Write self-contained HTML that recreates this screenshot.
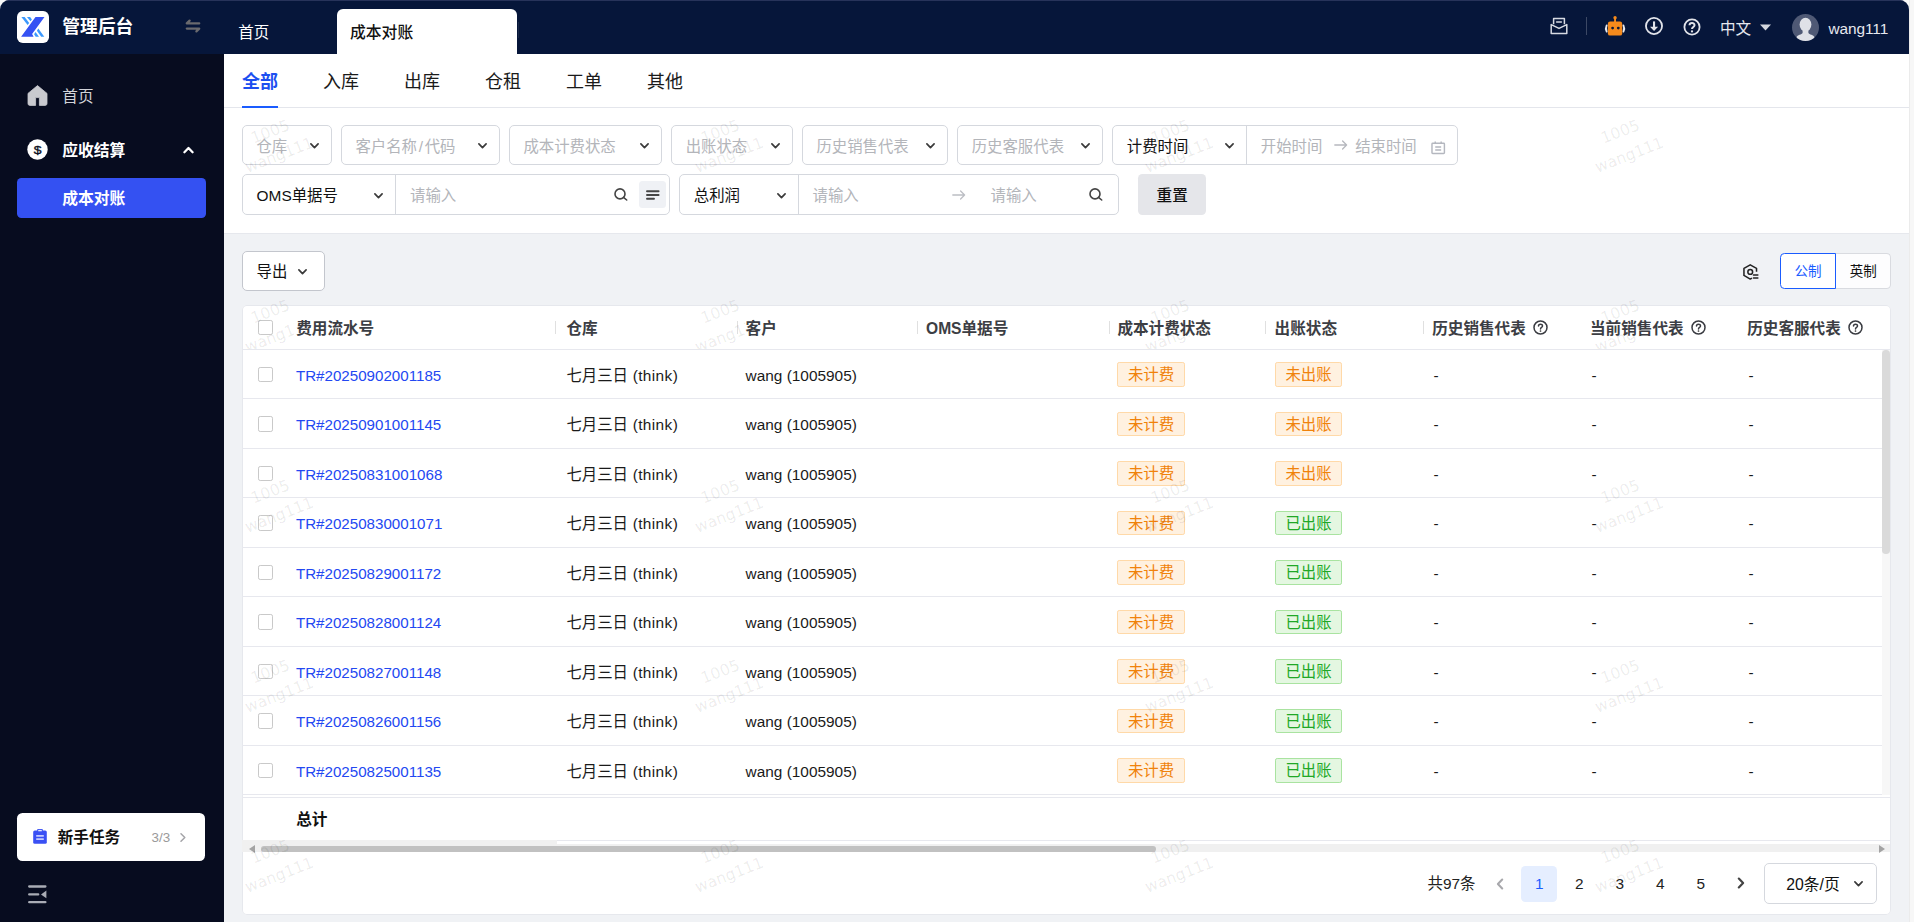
<!DOCTYPE html>
<html lang="zh-CN">
<head>
<meta charset="utf-8">
<title>成本对账 - 管理后台</title>
<style>
*{box-sizing:border-box;margin:0;padding:0}
html,body{width:1914px;height:922px;overflow:hidden;background:#f7f7f7;font-family:"Liberation Sans","Noto Sans CJK SC",sans-serif;font-size:15.4px;color:#1a1a1a}
.abs{position:absolute}
#win{position:absolute;left:0;top:0;width:1909px;height:922px;background:#f0f2f5;border-radius:9.5px 9.5px 0 0;overflow:hidden}
#hdr{position:absolute;left:0;top:0;width:1909px;height:54px;background:#06163a}
#hdr:before{content:"";position:absolute;left:0;top:0;width:100%;height:1px;background:#27335a}
#side{position:absolute;left:0;top:54px;width:224px;height:868px;background:#070c1f}
.t{position:absolute;white-space:nowrap;line-height:1}
svg{position:absolute;overflow:visible}
/* header */
#logo{position:absolute;left:16.9px;top:10.8px;width:31.8px;height:31.8px;background:#fff;border-radius:5.8px}
#atab{position:absolute;left:337px;top:9px;width:180px;height:46px;background:#fff;border-radius:6px 6px 0 0}
/* sidebar */
#sub{position:absolute;left:17px;top:178px;width:189px;height:40px;background:#3451f2;border-radius:4.4px}
#task{position:absolute;left:17px;top:813px;width:188px;height:48px;background:#fff;border-radius:5px}
/* content */
#tabs{position:absolute;left:224px;top:54px;width:1685px;height:54px;background:#fff;border-bottom:1px solid #e4e6ec}
#filt{position:absolute;left:224px;top:108px;width:1685px;height:125px;background:#fff}
.box{position:absolute;background:#fff;border:1px solid #d5d8de;border-radius:5px}
.ph{color:#b3b5ba}
.tb{top:18.5px;font-size:18px;color:#1a1a1a}
.ft{top:12.9px;font-size:15.4px}
.chv{top:16.9px}
#card{position:absolute;left:242px;top:305px;width:1649px;height:610px;background:#fff;border-radius:5px;overflow:hidden;box-shadow:inset 0 0 0 1px #e6e8ed}
.hl{position:absolute;left:0;width:1648px;height:1px;background:#e7e8ee}
.th{font-weight:bold;color:#3c3e44;font-size:15.6px}
.lnk{color:#2348f2}
.tag{position:absolute;height:24.6px;border-radius:2.2px;font-size:15.4px;line-height:24.2px;text-align:center;white-space:nowrap}
.tag.o{background:#fff1e0;border:1px solid #ffd9a8;color:#f0820a;width:68px}
.tag.g{background:#e4f7e1;border:1px solid #a9e3a0;color:#20a826;width:67px}
.cb{position:absolute;width:15.4px;height:15.4px;border:1px solid #c9c9c9;border-radius:2.2px;background:#fff}
.ls{letter-spacing:.4px}
.sep{position:absolute;width:1px;height:13px;background:#e0e0e0}
.wm{position:absolute;width:120px;height:50px;white-space:nowrap;font-family:"DejaVu Sans","Liberation Sans",sans-serif;font-size:15.6px;line-height:25px;color:rgba(0,0,0,.08);-webkit-text-stroke:0.35px rgba(0,0,0,.08);transform:rotate(-21deg);transform-origin:50% 50%;text-align:center;pointer-events:none}
</style>
</head>
<body>
<div style="position:absolute;left:1909px;top:0;width:1px;height:922px;background:#ebebeb"></div>
<div id="win">
<div id="hdr">
<div id="logo"><svg width="32" height="32" viewBox="0 0 32 32" style="left:0;top:0">
<polygon points="4.4,6.1 7.6,6.1 12.2,12 10.6,14.1" fill="#3b98fd"/>
<polygon points="9.9,6.1 13.1,6.1 14.9,8.6 13.5,10.3" fill="#3b98fd"/>
<polygon points="18.5,6.1 27.5,6.1 15.1,23 16.6,25.7 4.1,25.7" fill="#3552f3"/>
<polygon points="21.3,17.4 27.3,25.7 24.2,25.7 19.9,19.8" fill="#3b98fd"/>
<polygon points="18.5,21.1 22,25.7 18.7,25.7 17.1,23.2" fill="#3b98fd"/>
</svg></div>
<div class="t" style="left:62.2px;top:19px;font-size:17.8px;font-weight:bold;color:#fff">管理后台</div>
<svg width="16" height="14" viewBox="0 0 16 14" style="left:184.6px;top:19.2px" fill="none" stroke="#6a6a6e" stroke-width="2.3" stroke-linecap="round" stroke-linejoin="round"><path d="M14.2 4.4H1.8L4.6 1.6M1.8 9.6H14.2L11.4 12.4"/></svg>
<div class="t" style="left:238.3px;top:24.8px;font-size:15.5px;color:#fff">首页</div>
<div id="atab"></div>
<div class="t" style="left:350px;top:25px;font-size:15.8px;color:#111;font-weight:500">成本对账</div>
<div style="position:absolute;left:518px;top:22px;width:1px;height:16px;background:#1a2848"></div>
<svg width="18" height="18" viewBox="0 0 18 18" style="left:1550px;top:16.5px" fill="none" stroke="#d7dae2" stroke-width="1.5" stroke-linejoin="round"><path d="M3.6 7.2V1.6H14.4V7.2"/><path d="M1.2 7.6L9 11.4L16.8 7.6V16.6H1.2Z"/><path d="M6.6 5H11.4" stroke-linecap="round"/></svg>
<div style="position:absolute;left:1586px;top:17px;width:1px;height:18px;background:#3c4864"></div>
<svg width="22" height="20" viewBox="0 0 22 20" style="left:1604px;top:15.6px"><rect x="10.1" y="1.4" width="1.9" height="5" fill="#f58a1c"/><circle cx="11.05" cy="1.8" r="1.7" fill="#f58a1c"/><path d="M2.7 9.4Q1.1 12.5 2.7 15.6" fill="none" stroke="#e8eaf0" stroke-width="1.9" stroke-linecap="round"/><path d="M19.4 9.4Q21 12.5 19.4 15.6" fill="none" stroke="#e8eaf0" stroke-width="1.9" stroke-linecap="round"/><rect x="3.9" y="5.6" width="14.3" height="14" rx="2.2" fill="#f58a1c"/><circle cx="8.6" cy="12.1" r="1.4" fill="#08173a"/><circle cx="14.3" cy="12.1" r="1.4" fill="#08173a"/></svg>
<svg width="20" height="20" viewBox="0 0 20 20" style="left:1643.5px;top:16.1px" fill="none" stroke="#e2e4ea" stroke-width="1.8"><circle cx="10" cy="10" r="8.05"/><path d="M10.05 5.4V11" stroke-width="2.1"/><path d="M6 10.7H14.1L10.05 15Z" fill="#e2e4ea" stroke="none"/></svg>
<svg width="20" height="20" viewBox="0 0 20 20" style="left:1681.8px;top:17.1px" fill="none" stroke="#e2e4ea" stroke-width="1.8"><circle cx="10" cy="10" r="7.6"/><path d="M7.5 8.3C7.5 5.2 12.5 5.2 12.5 8.2C12.5 10 10 9.9 10 12" stroke-width="2" stroke-linecap="butt"/><circle cx="10" cy="14.4" r="1.15" fill="#e2e4ea" stroke="none"/></svg>
<div class="t" style="left:1720px;top:21.3px;font-size:15.6px;color:#e6e8ee">中文</div>
<svg width="11" height="7" viewBox="0 0 11 7" style="left:1760px;top:24px"><path d="M0 0.4H11L5.5 6.6Z" fill="#d4d7de"/></svg>
<svg width="27" height="27" viewBox="0 0 27 27" style="left:1792px;top:14px"><defs><clipPath id="avc"><circle cx="13.5" cy="13.5" r="13.5"/></clipPath></defs><circle cx="13.5" cy="13.5" r="13.5" fill="#4f5975"/><g clip-path="url(#avc)" fill="#dfe1e7"><ellipse cx="13.5" cy="10.6" rx="5.9" ry="6.9"/><path d="M10.6 15H16.4V19C17.2 20.6 21.6 20.8 22.6 23.4L21 27H6L4.4 23.4C5.4 20.8 9.8 20.6 10.6 19Z"/></g></svg>
<div class="t" style="left:1828.4px;top:20.8px;font-size:15.4px;color:#e6e8ee;letter-spacing:-0.05px">wang111</div>
</div>
<div id="side">
<svg width="21" height="21" viewBox="0 0 21 21" style="left:27px;top:31px"><path d="M10.5 0.6L20 8.4V18.6Q20 20.4 18.2 20.4H12.4V12.6H8.6V20.4H2.8Q1 20.4 1 18.6V8.4Z" fill="#c9cacf" stroke="#c9cacf" stroke-width="0.8" stroke-linejoin="round"/></svg>
<div class="t" style="left:62.3px;top:34.5px;font-size:15.6px;color:#d2d3d8">首页</div>
<svg width="21" height="21" viewBox="0 0 21 21" style="left:27.2px;top:84.6px"><circle cx="10.5" cy="10.5" r="10.2" fill="#fff"/><text x="0" y="0" transform="translate(10.5 14.5) scale(1.2 1)" text-anchor="middle" font-family="Liberation Sans,sans-serif" font-size="11.6" fill="#0a0f22" stroke="#0a0f22" stroke-width="0.35">$</text></svg>
<div class="t" style="left:62.2px;top:88.8px;font-size:15.8px;font-weight:bold;color:#fff">应收结算</div>
<svg width="11" height="8" viewBox="0 0 11 8" style="left:182.6px;top:92.4px" fill="none" stroke="#fff" stroke-width="2.3" stroke-linecap="round" stroke-linejoin="round"><path d="M1.4 6.2L5.5 2L9.6 6.2"/></svg>
<div id="subw" style="position:absolute;left:17px;top:124px;width:189px;height:40px;background:#3451f2;border-radius:4.4px"></div>
<div class="t" style="left:62.2px;top:137.1px;font-size:15.8px;font-weight:bold;color:#fff">成本对账</div>
<div style="position:absolute;left:17px;top:759px;width:188px;height:48px;background:#fff;border-radius:5.5px"></div>
<svg width="14" height="15" viewBox="0 0 14 15" style="left:32.6px;top:775.4px"><rect x="0.2" y="1.4" width="13.6" height="13.4" rx="1.6" fill="#3a50f4"/><rect x="4.2" y="0" width="5.6" height="2.8" rx="0.8" fill="#3a50f4"/><rect x="5.2" y="0.9" width="3.6" height="1.4" fill="#dfe4ff"/><rect x="3.2" y="6.2" width="7.6" height="1.4" fill="#e6e9ff"/><rect x="3.2" y="9.4" width="7.6" height="1.4" fill="#e6e9ff"/></svg>
<div class="t" style="left:57.7px;top:776px;font-size:15.6px;font-weight:bold;color:#111">新手任务</div>
<div class="t" style="left:151.6px;top:776.8px;font-size:13.4px;color:#9a9a9a">3/3</div>
<svg width="6" height="9" viewBox="0 0 6 9" style="left:179.6px;top:779.2px" fill="none" stroke="#a4a4a8" stroke-width="1.5" stroke-linecap="round" stroke-linejoin="round"><path d="M1 0.8L4.8 4.5L1 8.2"/></svg>
<svg width="19" height="19" viewBox="0 0 19 19" style="left:28.4px;top:831px" fill="none" stroke="#a9acb5" stroke-width="2.3" stroke-linecap="round"><path d="M1.2 1.5H17.4M1.2 9.4H10.2M1.2 17.2H17.4"/><path d="M18.4 5.6V13.2L13 9.4Z" fill="#a9acb5" stroke="none"/></svg>
</div>
<div id="tabs">
<div class="t" style="left:18px;top:18.5px;font-size:18px;font-weight:bold;color:#1c4ff0">全部</div>
<div style="position:absolute;left:18px;top:51.6px;width:36px;height:2.4px;background:#1a5cff"></div>
<div class="t tb" style="left:99px">入库</div>
<div class="t tb" style="left:180px">出库</div>
<div class="t tb" style="left:261px">仓租</div>
<div class="t tb" style="left:342px">工单</div>
<div class="t tb" style="left:423px">其他</div>
</div>
<div id="filt"><div id="fo" style="position:absolute;left:0;top:1px;width:0;height:0">
<div class="box" style="left:18px;top:16px;width:90px;height:39.6px"><div class="t ft ph" style="left:13.4px">仓库</div><svg class="chv" width="9" height="6" viewBox="0 0 9 6" style="left:67px" fill="none" stroke="#3a3a3a" stroke-width="1.7" stroke-linecap="round" stroke-linejoin="round"><path d="M0.9 0.9L4.5 4.6L8.1 0.9"/></svg></div>
<div class="box" style="left:117px;top:16px;width:159px;height:39.6px"><div class="t ft ph" style="left:13.4px">客户名称<span style="margin:0 1.7px">/</span>代码</div><svg class="chv" width="9" height="6" viewBox="0 0 9 6" style="left:136px" fill="none" stroke="#3a3a3a" stroke-width="1.7" stroke-linecap="round" stroke-linejoin="round"><path d="M0.9 0.9L4.5 4.6L8.1 0.9"/></svg></div>
<div class="box" style="left:285px;top:16px;width:153px;height:39.6px"><div class="t ft ph" style="left:13.4px">成本计费状态</div><svg class="chv" width="9" height="6" viewBox="0 0 9 6" style="left:130px" fill="none" stroke="#3a3a3a" stroke-width="1.7" stroke-linecap="round" stroke-linejoin="round"><path d="M0.9 0.9L4.5 4.6L8.1 0.9"/></svg></div>
<div class="box" style="left:447.3px;top:16px;width:122px;height:39.6px"><div class="t ft ph" style="left:13.4px">出账状态</div><svg class="chv" width="9" height="6" viewBox="0 0 9 6" style="left:99px" fill="none" stroke="#3a3a3a" stroke-width="1.7" stroke-linecap="round" stroke-linejoin="round"><path d="M0.9 0.9L4.5 4.6L8.1 0.9"/></svg></div>
<div class="box" style="left:578px;top:16px;width:146px;height:39.6px"><div class="t ft ph" style="left:13.4px">历史销售代表</div><svg class="chv" width="9" height="6" viewBox="0 0 9 6" style="left:123px" fill="none" stroke="#3a3a3a" stroke-width="1.7" stroke-linecap="round" stroke-linejoin="round"><path d="M0.9 0.9L4.5 4.6L8.1 0.9"/></svg></div>
<div class="box" style="left:733.3px;top:16px;width:145.6px;height:39.6px"><div class="t ft ph" style="left:13.4px">历史客服代表</div><svg class="chv" width="9" height="6" viewBox="0 0 9 6" style="left:122.6px" fill="none" stroke="#3a3a3a" stroke-width="1.7" stroke-linecap="round" stroke-linejoin="round"><path d="M0.9 0.9L4.5 4.6L8.1 0.9"/></svg></div>
<div class="box" style="left:888.2px;top:16px;width:346px;height:39.6px"><div class="t ft" style="left:13.6px;color:#111">计费时间</div><svg class="chv" width="9" height="6" viewBox="0 0 9 6" style="left:112px" fill="none" stroke="#3a3a3a" stroke-width="1.7" stroke-linecap="round" stroke-linejoin="round"><path d="M0.9 0.9L4.5 4.6L8.1 0.9"/></svg><div style="position:absolute;left:132.7px;top:0;width:1px;height:100%;background:#d5d8de"></div><div class="t ft ph" style="left:147.6px">开始时间</div><svg width="14" height="10" viewBox="0 0 14 10" style="left:220.6px;top:13.6px" fill="none" stroke="#b6b8be" stroke-width="1.3" stroke-linecap="round" stroke-linejoin="round"><path d="M0.8 5H12.6M8.6 1L12.6 5L8.6 9"/></svg><div class="t ft ph" style="left:242px">结束时间</div><svg width="14.4" height="13.4" viewBox="0 0 15 14" style="left:318.2px;top:14.8px" fill="none" stroke="#b4b7bf" stroke-width="1.5"><rect x="1" y="2.4" width="13" height="10.6" rx="0.8"/><path d="M4.4 0.4V3M10.6 0.4V3M4.4 6.2H10.6M4.4 9.4H10.6"/></svg></div>
<div class="box" style="left:18px;top:65px;width:428px;height:40.6px"><div class="t ft" style="left:13.6px;color:#111">OMS单据号</div><svg class="chv" width="9" height="6" viewBox="0 0 9 6" style="left:131px;top:18.2px" fill="none" stroke="#3a3a3a" stroke-width="1.7" stroke-linecap="round" stroke-linejoin="round"><path d="M0.9 0.9L4.5 4.6L8.1 0.9"/></svg><div style="position:absolute;left:151.7px;top:0;width:1px;height:100%;background:#d5d8de"></div><div class="t ft ph" style="left:167px">请输入</div><svg width="14" height="13" viewBox="0 0 14 13" style="left:371px;top:12.9px" fill="none" stroke="#444" stroke-width="1.6" stroke-linecap="round"><circle cx="6" cy="5.9" r="5"/><path d="M9.8 9.6L12.7 12"/></svg><div style="position:absolute;left:396.4px;top:6.4px;width:26.6px;height:26.6px;background:#eff1f5;border-radius:3.5px"></div><svg width="15" height="10" viewBox="0 0 15 10" style="left:402.6px;top:15px" fill="none" stroke="#444" stroke-width="1.9" stroke-linecap="round"><path d="M1 1.2H12.6M1 5H12.6M1 8.8H8"/></svg></div>
<div class="box" style="left:455.2px;top:65px;width:440px;height:40.6px"><div class="t ft" style="left:13.6px;color:#111">总利润</div><svg class="chv" width="9" height="6" viewBox="0 0 9 6" style="left:96.4px;top:18.2px" fill="none" stroke="#3a3a3a" stroke-width="1.7" stroke-linecap="round" stroke-linejoin="round"><path d="M0.9 0.9L4.5 4.6L8.1 0.9"/></svg><div style="position:absolute;left:117.7px;top:0;width:1px;height:100%;background:#d5d8de"></div><div class="t ft ph" style="left:132.4px">请输入</div><svg width="14" height="10" viewBox="0 0 14 10" style="left:272.2px;top:14.6px" fill="none" stroke="#bcbec4" stroke-width="1.3" stroke-linecap="round" stroke-linejoin="round"><path d="M0.8 5H12.6M8.6 1L12.6 5L8.6 9"/></svg><div class="t ft ph" style="left:310.4px">请输入</div><svg width="14" height="13" viewBox="0 0 14 13" style="left:408.6px;top:12.7px" fill="none" stroke="#444" stroke-width="1.6" stroke-linecap="round"><circle cx="6" cy="5.9" r="5"/><path d="M9.8 9.6L12.7 12"/></svg></div>
<div style="position:absolute;left:914px;top:65.2px;width:68px;height:40.4px;background:#e5e6ea;border-radius:4.4px"></div><div class="t" style="left:932.6px;top:78.6px;font-size:15.6px;color:#111;font-weight:500">重置</div>
</div></div>
<div style="position:absolute;left:224px;top:233px;width:1685px;height:1px;background:#e6e8ed"></div>
<div id="tool"><div class="box" style="left:242px;top:251px;width:82.6px;height:39.6px;border-color:#c3c6cd"><div class="t" style="left:13.6px;top:11.6px;font-size:15.4px;color:#111">导出</div><svg width="9" height="6" viewBox="0 0 9 6" style="left:54.6px;top:16.6px" fill="none" stroke="#3a3a3a" stroke-width="1.7" stroke-linecap="round" stroke-linejoin="round"><path d="M0.9 0.9L4.5 4.6L8.1 0.9"/></svg></div><svg width="16.2" height="16.2" viewBox="0 0 17 17" style="left:1743.4px;top:263.8px" fill="none" stroke="#222" stroke-width="1.6" stroke-linejoin="round"><path d="M14.2 8.2V4.6L7.6 0.9L1 4.6V12L7.6 15.8L9.4 14.8"/><circle cx="7.6" cy="8.3" r="2.5"/><path d="M11 11.6H15.6M11 14.6H15.6" stroke-linecap="round"/></svg><div style="position:absolute;left:1835px;top:253.4px;width:56.2px;height:35.2px;background:#fdfdfe;border:1px solid #d9dbe0;border-left:none;border-radius:0 4.4px 4.4px 0"></div><div style="position:absolute;left:1779.8px;top:253.4px;width:56.2px;height:35.2px;background:#fff;border:1px solid #1a5cff;border-radius:4.4px 0 0 4.4px"></div><div class="t" style="left:1794.6px;top:265.4px;font-size:13.5px;color:#1a5cff">公制</div><div class="t" style="left:1849.8px;top:265.4px;font-size:13.5px;color:#111">英制</div></div>
<div id="card"><div style="position:absolute;left:0;top:1px;width:1648px;height:608px">
<div class="cb" style="left:16px;top:13.6px"></div>
<div class="t th" style="left:54.2px;top:14.6px">费用流水号</div>
<div class="t th" style="left:324.4px;top:14.6px">仓库</div>
<div class="t th" style="left:503.6px;top:14.6px">客户</div>
<div class="t th" style="left:684px;top:14.6px">OMS单据号</div>
<div class="t th" style="left:875.4px;top:14.6px">成本计费状态</div>
<div class="t th" style="left:1032.6px;top:14.6px">出账状态</div>
<div class="t th" style="left:1190.2px;top:14.6px">历史销售代表</div>
<div class="t th" style="left:1348px;top:14.6px">当前销售代表</div>
<div class="t th" style="left:1505.2px;top:14.6px">历史客服代表</div>
<div class="sep" style="left:313.4px;top:15px"></div>
<div class="sep" style="left:494.7px;top:15px"></div>
<div class="sep" style="left:674.5px;top:15px"></div>
<div class="sep" style="left:866.5px;top:15px"></div>
<div class="sep" style="left:1023.3px;top:15px"></div>
<div class="sep" style="left:1181.4px;top:15px"></div>
<svg width="15" height="15" viewBox="0 0 15 15" style="left:1291px;top:13.7px" fill="none" stroke="#3a3c42" stroke-width="1.5"><circle cx="7.5" cy="7.5" r="6.5"/><path d="M5.5 6.1C5.5 3.6 9.5 3.6 9.5 6C9.5 7.5 7.5 7.4 7.5 9" stroke-linecap="round"/><circle cx="7.5" cy="11" r="0.85" fill="#333" stroke="none"/></svg>
<svg width="15" height="15" viewBox="0 0 15 15" style="left:1448.6px;top:13.7px" fill="none" stroke="#3a3c42" stroke-width="1.5"><circle cx="7.5" cy="7.5" r="6.5"/><path d="M5.5 6.1C5.5 3.6 9.5 3.6 9.5 6C9.5 7.5 7.5 7.4 7.5 9" stroke-linecap="round"/><circle cx="7.5" cy="11" r="0.85" fill="#333" stroke="none"/></svg>
<svg width="15" height="15" viewBox="0 0 15 15" style="left:1605.8px;top:13.7px" fill="none" stroke="#3a3c42" stroke-width="1.5"><circle cx="7.5" cy="7.5" r="6.5"/><path d="M5.5 6.1C5.5 3.6 9.5 3.6 9.5 6C9.5 7.5 7.5 7.4 7.5 9" stroke-linecap="round"/><circle cx="7.5" cy="11" r="0.85" fill="#333" stroke="none"/></svg>
<div class="hl" style="top:43px"></div>
<div class="cb" style="left:16px;top:60.7px"></div><div class="t lnk" style="left:53.9px;top:61.6px;font-size:15.15px">TR#20250902001185</div><div class="t" style="left:324.4px;top:61.6px">七月三日<span class="ls"> (think)</span></div><div class="t" style="left:503.6px;top:61.6px">wang (1005905)</div><div class="tag o" style="left:875px;top:56px">未计费</div><div class="tag o" style="left:1033px;top:56px;width:67px">未出账</div><div class="t" style="left:1191.6px;top:61.6px">-</div><div class="t" style="left:1349.4px;top:61.6px">-</div><div class="t" style="left:1506.6px;top:61.6px">-</div><div class="hl" style="top:92.2px"></div>
<div class="cb" style="left:16px;top:110.2px"></div><div class="t lnk" style="left:53.9px;top:111.1px;font-size:15.15px">TR#20250901001145</div><div class="t" style="left:324.4px;top:111.1px">七月三日<span class="ls"> (think)</span></div><div class="t" style="left:503.6px;top:111.1px">wang (1005905)</div><div class="tag o" style="left:875px;top:105.5px">未计费</div><div class="tag o" style="left:1033px;top:105.5px;width:67px">未出账</div><div class="t" style="left:1191.6px;top:111.1px">-</div><div class="t" style="left:1349.4px;top:111.1px">-</div><div class="t" style="left:1506.6px;top:111.1px">-</div><div class="hl" style="top:141.7px"></div>
<div class="cb" style="left:16px;top:159.7px"></div><div class="t lnk" style="left:53.9px;top:160.6px;font-size:15.15px">TR#20250831001068</div><div class="t" style="left:324.4px;top:160.6px">七月三日<span class="ls"> (think)</span></div><div class="t" style="left:503.6px;top:160.6px">wang (1005905)</div><div class="tag o" style="left:875px;top:155px">未计费</div><div class="tag o" style="left:1033px;top:155px;width:67px">未出账</div><div class="t" style="left:1191.6px;top:160.6px">-</div><div class="t" style="left:1349.4px;top:160.6px">-</div><div class="t" style="left:1506.6px;top:160.6px">-</div><div class="hl" style="top:191.2px"></div>
<div class="cb" style="left:16px;top:209.2px"></div><div class="t lnk" style="left:53.9px;top:210.1px;font-size:15.15px">TR#20250830001071</div><div class="t" style="left:324.4px;top:210.1px">七月三日<span class="ls"> (think)</span></div><div class="t" style="left:503.6px;top:210.1px">wang (1005905)</div><div class="tag o" style="left:875px;top:204.5px">未计费</div><div class="tag g" style="left:1033px;top:204.5px">已出账</div><div class="t" style="left:1191.6px;top:210.1px">-</div><div class="t" style="left:1349.4px;top:210.1px">-</div><div class="t" style="left:1506.6px;top:210.1px">-</div><div class="hl" style="top:240.7px"></div>
<div class="cb" style="left:16px;top:258.7px"></div><div class="t lnk" style="left:53.9px;top:259.6px;font-size:15.15px">TR#20250829001172</div><div class="t" style="left:324.4px;top:259.6px">七月三日<span class="ls"> (think)</span></div><div class="t" style="left:503.6px;top:259.6px">wang (1005905)</div><div class="tag o" style="left:875px;top:254px">未计费</div><div class="tag g" style="left:1033px;top:254px">已出账</div><div class="t" style="left:1191.6px;top:259.6px">-</div><div class="t" style="left:1349.4px;top:259.6px">-</div><div class="t" style="left:1506.6px;top:259.6px">-</div><div class="hl" style="top:290.2px"></div>
<div class="cb" style="left:16px;top:308.2px"></div><div class="t lnk" style="left:53.9px;top:309.1px;font-size:15.15px">TR#20250828001124</div><div class="t" style="left:324.4px;top:309.1px">七月三日<span class="ls"> (think)</span></div><div class="t" style="left:503.6px;top:309.1px">wang (1005905)</div><div class="tag o" style="left:875px;top:303.5px">未计费</div><div class="tag g" style="left:1033px;top:303.5px">已出账</div><div class="t" style="left:1191.6px;top:309.1px">-</div><div class="t" style="left:1349.4px;top:309.1px">-</div><div class="t" style="left:1506.6px;top:309.1px">-</div><div class="hl" style="top:339.7px"></div>
<div class="cb" style="left:16px;top:357.7px"></div><div class="t lnk" style="left:53.9px;top:358.6px;font-size:15.15px">TR#20250827001148</div><div class="t" style="left:324.4px;top:358.6px">七月三日<span class="ls"> (think)</span></div><div class="t" style="left:503.6px;top:358.6px">wang (1005905)</div><div class="tag o" style="left:875px;top:353px">未计费</div><div class="tag g" style="left:1033px;top:353px">已出账</div><div class="t" style="left:1191.6px;top:358.6px">-</div><div class="t" style="left:1349.4px;top:358.6px">-</div><div class="t" style="left:1506.6px;top:358.6px">-</div><div class="hl" style="top:389.2px"></div>
<div class="cb" style="left:16px;top:407.2px"></div><div class="t lnk" style="left:53.9px;top:408.1px;font-size:15.15px">TR#20250826001156</div><div class="t" style="left:324.4px;top:408.1px">七月三日<span class="ls"> (think)</span></div><div class="t" style="left:503.6px;top:408.1px">wang (1005905)</div><div class="tag o" style="left:875px;top:402.5px">未计费</div><div class="tag g" style="left:1033px;top:402.5px">已出账</div><div class="t" style="left:1191.6px;top:408.1px">-</div><div class="t" style="left:1349.4px;top:408.1px">-</div><div class="t" style="left:1506.6px;top:408.1px">-</div><div class="hl" style="top:438.7px"></div>
<div class="cb" style="left:16px;top:456.7px"></div><div class="t lnk" style="left:53.9px;top:457.6px;font-size:15.15px">TR#20250825001135</div><div class="t" style="left:324.4px;top:457.6px">七月三日<span class="ls"> (think)</span></div><div class="t" style="left:503.6px;top:457.6px">wang (1005905)</div><div class="tag o" style="left:875px;top:452px">未计费</div><div class="tag g" style="left:1033px;top:452px">已出账</div><div class="t" style="left:1191.6px;top:457.6px">-</div><div class="t" style="left:1349.4px;top:457.6px">-</div><div class="t" style="left:1506.6px;top:457.6px">-</div><div class="hl" style="top:488.2px"></div>
<div class="hl" style="top:491.4px"></div>
<div class="t" style="left:54.2px;top:506.2px;font-weight:bold;color:#111;font-size:15.6px">总计</div>
<div class="hl" style="top:533.6px;background:#e4e4e6;width:314.4px;height:2px"></div>
<div class="hl" style="top:534.4px"></div>
<div style="position:absolute;left:0;top:537.8px;width:1648px;height:8.7px;background:#f0f0f0"></div><div style="position:absolute;left:0;top:534.3px;width:314.6px;height:4px;background:#f0f0f0"></div>
<div style="position:absolute;left:18.8px;top:540px;width:895px;height:5.8px;background:#c1c1c1;border-radius:3px"></div>
<svg width="6" height="8" viewBox="0 0 6 8" style="left:7px;top:539.2px"><path d="M6 0V8L0 4Z" fill="#a3a3a3"/></svg>
<svg width="6" height="8" viewBox="0 0 6 8" style="left:1636.6px;top:539.2px"><path d="M0 0V8L6 4Z" fill="#a3a3a3"/></svg>
<div style="position:absolute;left:1640.4px;top:44px;width:7.6px;height:445px;background:#f7f7f7"></div>
<div style="position:absolute;left:1640.4px;top:44.4px;width:7.6px;height:203.2px;background:#dadada;border-radius:3.8px"></div>
<div class="t" style="left:1185.6px;top:570px;color:#222">共97条</div>
<svg width="8" height="12" viewBox="0 0 8 12" style="left:1253.8px;top:572px" fill="none" stroke="#a8a8ac" stroke-width="2.1" stroke-linecap="round" stroke-linejoin="round"><path d="M6.2 1.6L1.9 6L6.2 10.4"/></svg>
<div style="position:absolute;left:1279.4px;top:560.2px;width:35.6px;height:35.4px;background:#e5eeff;border-radius:4.4px"></div>
<div class="t" style="left:1287.2px;top:570.4px;width:20px;text-align:center;color:#1a5cff">1</div>
<div class="t" style="left:1327.4px;top:570.4px;width:20px;text-align:center;color:#222">2</div>
<div class="t" style="left:1367.7px;top:570.4px;width:20px;text-align:center;color:#222">3</div>
<div class="t" style="left:1408.4px;top:570.4px;width:20px;text-align:center;color:#222">4</div>
<div class="t" style="left:1448.8px;top:570.4px;width:20px;text-align:center;color:#222">5</div>
<svg width="8" height="12" viewBox="0 0 8 12" style="left:1494.8px;top:571.4px" fill="none" stroke="#444" stroke-width="2.2" stroke-linecap="round" stroke-linejoin="round"><path d="M1.8 1.6L6.1 6L1.8 10.4"/></svg>
<div class="box" style="left:1522.4px;top:557px;width:112.4px;height:40.6px"><div class="t" style="left:20.8px;top:12.6px;color:#111;font-size:15.8px">20条/页</div><svg width="9" height="6" viewBox="0 0 9 6" style="left:89px;top:17.4px" fill="none" stroke="#3a3a3a" stroke-width="1.7" stroke-linecap="round" stroke-linejoin="round"><path d="M0.9 0.9L4.5 4.6L8.1 0.9"/></svg></div>
</div></div>
<div id="wms" style="position:absolute;left:0.8px;top:0.8px">
<div class="wm" style="left:214.4px;top:118px">1005<br>wang111</div>
<div style="position:absolute;left:204.4px;top:273px;width:89.3px;height:75.7px;overflow:hidden"><div class="wm" style="left:10px;top:25px">1005<br>wang111</div></div>
<div class="wm" style="left:214.4px;top:478px">1005<br>wang111</div>
<div class="wm" style="left:214.4px;top:658px">1005<br>wang111</div>
<div class="wm" style="left:214.4px;top:838px">1005<br>wang111</div>
<div class="wm" style="left:664.4px;top:118px">1005<br>wang111</div>
<div style="position:absolute;left:654.4px;top:273px;width:89.8px;height:75.7px;overflow:hidden"><div class="wm" style="left:10px;top:25px">1005<br>wang111</div></div>
<div class="wm" style="left:664.4px;top:478px">1005<br>wang111</div>
<div class="wm" style="left:664.4px;top:658px">1005<br>wang111</div>
<div class="wm" style="left:664.4px;top:838px">1005<br>wang111</div>
<div class="wm" style="left:1114.4px;top:118px">1005<br>wang111</div>
<div style="position:absolute;left:1104.4px;top:273px;width:84.8px;height:75.7px;overflow:hidden"><div class="wm" style="left:10px;top:25px">1005<br>wang111</div></div>
<div class="wm" style="left:1114.4px;top:478px">1005<br>wang111</div>
<div class="wm" style="left:1114.4px;top:658px">1005<br>wang111</div>
<div class="wm" style="left:1114.4px;top:838px">1005<br>wang111</div>
<div class="wm" style="left:1564.4px;top:118px">1005<br>wang111</div>
<div style="position:absolute;left:1554.4px;top:273px;width:89.8px;height:75.7px;overflow:hidden"><div class="wm" style="left:10px;top:25px">1005<br>wang111</div></div>
<div class="wm" style="left:1564.4px;top:478px">1005<br>wang111</div>
<div class="wm" style="left:1564.4px;top:658px">1005<br>wang111</div>
<div class="wm" style="left:1564.4px;top:838px">1005<br>wang111</div>
</div>
</div>
</body>
</html>
